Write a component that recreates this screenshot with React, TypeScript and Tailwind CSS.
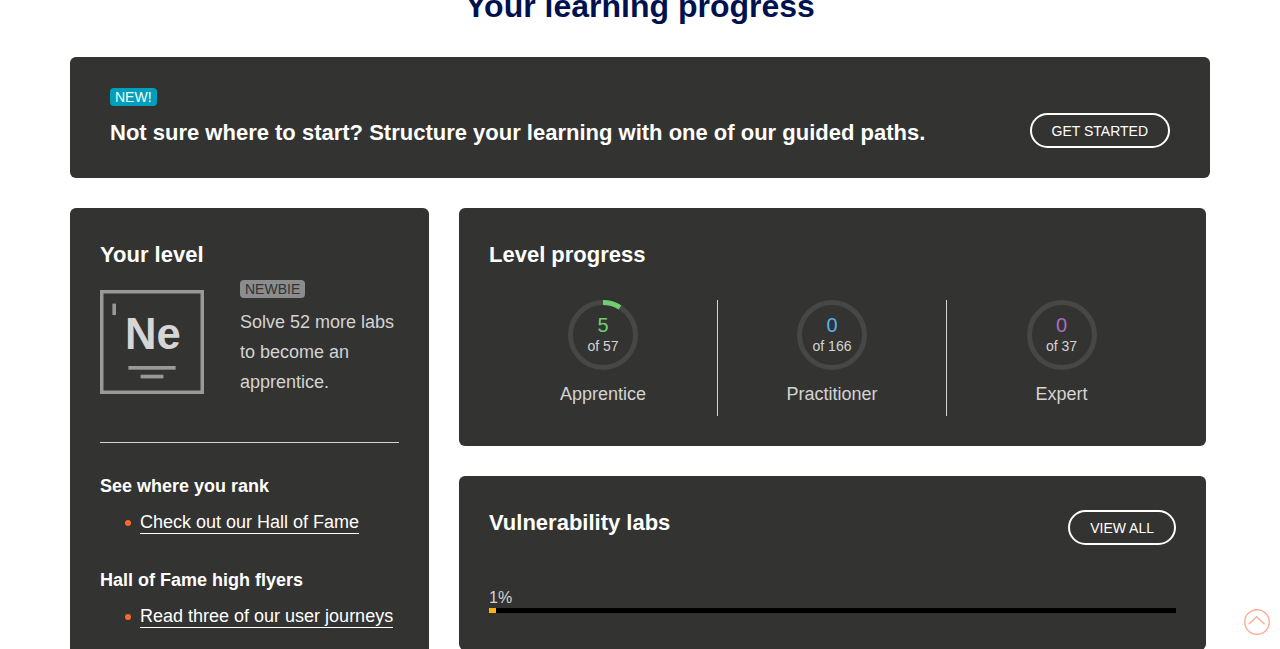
import type { ReactNode } from "react";

const levels = [
  { name: "Apprentice", done: 5, total: 57, text: "text-[#6fcf6f]", stroke: "stroke-[#6fcf6f]" },
  { name: "Practitioner", done: 0, total: 166, text: "text-[#4db5f5]", stroke: "stroke-[#4db5f5]" },
  { name: "Expert", done: 0, total: 37, text: "text-[#a86cc1]", stroke: "stroke-[#a86cc1]" },
];

function Card({ children, className = "" }: { children: ReactNode; className?: string }) {
  return <section className={`rounded-md bg-[#333332] ${className}`}>{children}</section>;
}

function CardTitle({ children }: { children: ReactNode }) {
  return <h2 className="text-[22px] leading-[34px] font-bold text-white">{children}</h2>;
}

function PillLink({ children }: { children: ReactNode }) {
  return (
    <a
      href="#"
      className="flex h-[35px] shrink-0 items-center rounded-full border-2 border-white px-5 text-sm text-white"
    >
      {children}
    </a>
  );
}

function LevelRing({ done, total, text, stroke }: { done: number; total: number; text: string; stroke: string }) {
  return (
    <div className="grid size-[70px] justify-items-center">
      <svg viewBox="0 0 70 70" className="col-start-1 row-start-1 size-[70px] -rotate-90" fill="none" strokeWidth="5">
        <circle cx="35" cy="35" r="32.5" className="stroke-[#474746]" />
        {done > 0 && (
          <circle
            cx="35"
            cy="35"
            r="32.5"
            pathLength={total}
            strokeDasharray={`${done} ${total}`}
            className={stroke}
          />
        )}
      </svg>
      <div className="col-start-1 row-start-1 pt-[15px] text-center">
        <div className={`text-xl leading-5 ${text}`}>{done}</div>
        <div className="text-sm leading-[22px]">of {total}</div>
      </div>
    </div>
  );
}

function NewbieIcon() {
  return (
    <svg viewBox="0 0 104 104" className="mt-2.5 size-[104px] shrink-0" role="img" aria-label="Newbie">
      <rect x="1.75" y="1.75" width="100.5" height="100.5" fill="none" stroke="#999997" strokeWidth="3.5" />
      <rect x="12.4" y="13.6" width="3.6" height="11.4" fill="#999997" />
      <text x="25" y="59" fill="#d6d6d6" fontSize="43.6" fontWeight="700">
        Ne
      </text>
      <rect x="28.4" y="76" width="47.2" height="3.7" fill="#999997" />
      <rect x="40.6" y="84.7" width="22.8" height="3.7" fill="#999997" />
    </svg>
  );
}

function LinkList({ title, link, className = "" }: { title: string; link: string; className?: string }) {
  return (
    <div className={className}>
      <h3 className="text-lg leading-[30px] font-bold text-white">{title}</h3>
      <ul className="mt-[7px] pl-[25px] text-lg">
        <li className="flex min-h-[30px] items-center gap-[9px] before:size-1.5 before:shrink-0 before:rounded-full before:bg-[#ff6633]">
          <a href="#" className="border-b border-white leading-[21px] text-white">
            {link}
          </a>
        </li>
      </ul>
    </div>
  );
}

export default function App() {
  return (
    <div className="flex min-h-screen flex-col items-center overflow-hidden bg-white font-['Liberation_Sans',Arial,sans-serif] text-[#d4d4d2]">
      <h1 className="-mt-3.5 mb-[31px] text-center text-[32px] leading-10 font-bold text-[#00114f]">
        Your learning progress
      </h1>

      <main className="flex w-full max-w-[1140px] flex-col gap-[30px]">
        <Card className="flex items-end justify-between gap-6 px-10 pt-[31px] pb-[30px]">
          <div className="flex flex-col items-start gap-2.5">
            <span className="rounded bg-[#00a0bc] px-[5px] text-sm leading-[18px] text-white">NEW!</span>
            <div className="-mb-0.5">
              <CardTitle>Not sure where to start? Structure your learning with one of our guided paths.</CardTitle>
            </div>
          </div>
          <PillLink>GET STARTED</PillLink>
        </Card>

        <div className="grid grid-cols-[359fr_747fr] items-start gap-[30px] pr-1">
          <Card className="p-[30px]">
            <CardTitle>Your level</CardTitle>
            <div className="mt-2 flex items-start gap-9 border-b border-[#d4d4d2] pb-[45px]">
              <NewbieIcon />
              <div>
                <span className="block w-fit rounded bg-[#8b8c8e] px-[5px] text-sm leading-[18px] text-[#333332]">
                  NEWBIE
                </span>
                <p className="mt-[9px] text-lg leading-[30px]">Solve 52 more labs to become an apprentice.</p>
              </div>
            </div>
            <LinkList className="mt-7" title="See where you rank" link="Check out our Hall of Fame" />
            <LinkList className="mt-[27px]" title="Hall of Fame high flyers" link="Read three of our user journeys" />
          </Card>

          <div className="flex flex-col gap-[30px]">
            <Card className="p-[30px]">
              <CardTitle>Level progress</CardTitle>
              <div className="mt-7 grid grid-cols-3 divide-x divide-[#d4d4d2]">
                {levels.map((level) => (
                  <div key={level.name} className="flex flex-col items-center pb-[7px]">
                    <LevelRing done={level.done} total={level.total} text={level.text} stroke={level.stroke} />
                    <p className="mt-[9px] text-lg leading-[30px]">{level.name}</p>
                  </div>
                ))}
              </div>
            </Card>

            <Card className="px-[30px] pt-[30px] pb-[37px]">
              <div className="flex items-start justify-between">
                <CardTitle>Vulnerability labs</CardTitle>
                <div className="pt-1">
                  <PillLink>VIEW ALL</PillLink>
                </div>
              </div>
              <p className="mt-[43px] text-base leading-5">1%</p>
              <div className="h-[5px] bg-black">
                <div className="h-full w-[1%] bg-[#ffb013]" />
              </div>
            </Card>
          </div>
        </div>
      </main>

      <a href="#" aria-label="Back to top" className="fixed right-2.5 bottom-3.5 size-[26px]">
        <svg viewBox="0 0 26 26" className="size-full" fill="none" stroke="#ffad94" strokeWidth="1.4">
          <circle cx="13" cy="13" r="12.3" />
          <path d="M4.7 15.3 L12.6 7.7 L20.6 15.3" />
        </svg>
      </a>
    </div>
  );
}
